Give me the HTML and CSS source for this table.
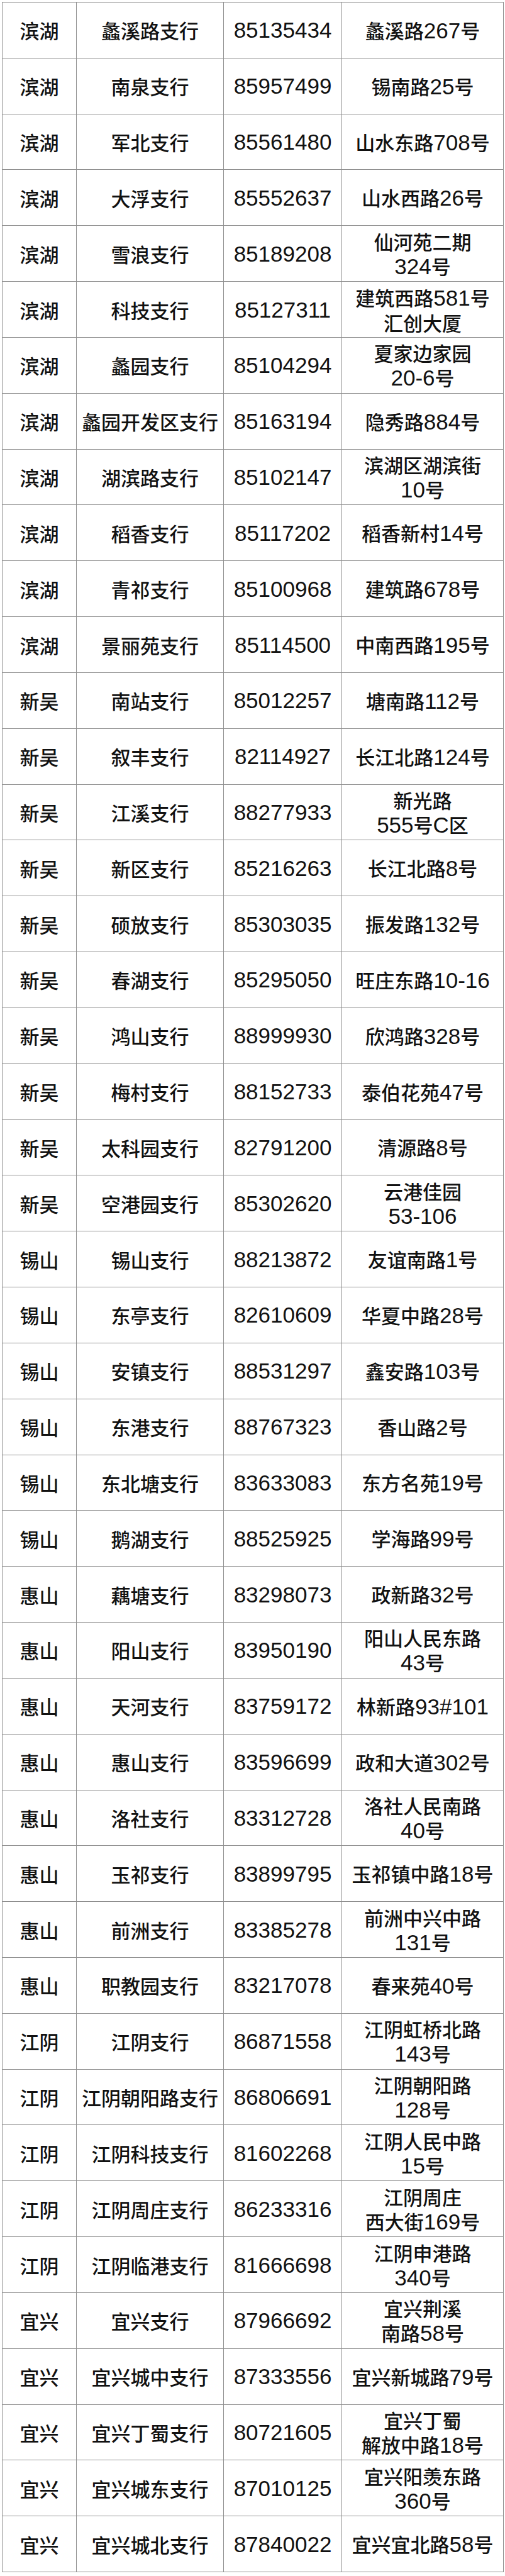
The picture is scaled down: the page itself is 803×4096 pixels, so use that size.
FILE: index.html
```html
<!DOCTYPE html>
<html lang="zh-CN">
<head>
<meta charset="utf-8">
<title>网点列表</title>
<link rel="stylesheet" href="styles.css">
</head>
<body>
<div class="grid">
<div class="c">滨湖</div><div class="c">蠡溪路支行</div><div class="c n">85135434</div><div class="c"><p class="t">蠡溪路<span class="n">267</span>号</p></div>
<div class="c">滨湖</div><div class="c">南泉支行</div><div class="c n">85957499</div><div class="c"><p class="t">锡南路<span class="n">25</span>号</p></div>
<div class="c">滨湖</div><div class="c">军北支行</div><div class="c n">85561480</div><div class="c"><p class="t">山水东路<span class="n">708</span>号</p></div>
<div class="c">滨湖</div><div class="c">大浮支行</div><div class="c n">85552637</div><div class="c"><p class="t">山水西路<span class="n">26</span>号</p></div>
<div class="c">滨湖</div><div class="c">雪浪支行</div><div class="c n">85189208</div><div class="c"><p class="t">仙河苑二期<br><span class="n">324</span>号</p></div>
<div class="c">滨湖</div><div class="c">科技支行</div><div class="c n">85127311</div><div class="c"><p class="t">建筑西路<span class="n">581</span>号<br>汇创大厦</p></div>
<div class="c">滨湖</div><div class="c">蠡园支行</div><div class="c n">85104294</div><div class="c"><p class="t">夏家边家园<br><span class="n">20-6</span>号</p></div>
<div class="c">滨湖</div><div class="c">蠡园开发区支行</div><div class="c n">85163194</div><div class="c"><p class="t">隐秀路<span class="n">884</span>号</p></div>
<div class="c">滨湖</div><div class="c">湖滨路支行</div><div class="c n">85102147</div><div class="c"><p class="t">滨湖区湖滨街<br><span class="n">10</span>号</p></div>
<div class="c">滨湖</div><div class="c">稻香支行</div><div class="c n">85117202</div><div class="c"><p class="t">稻香新村<span class="n">14</span>号</p></div>
<div class="c">滨湖</div><div class="c">青祁支行</div><div class="c n">85100968</div><div class="c"><p class="t">建筑路<span class="n">678</span>号</p></div>
<div class="c">滨湖</div><div class="c">景丽苑支行</div><div class="c n">85114500</div><div class="c"><p class="t">中南西路<span class="n">195</span>号</p></div>
<div class="c">新吴</div><div class="c">南站支行</div><div class="c n">85012257</div><div class="c"><p class="t">塘南路<span class="n">112</span>号</p></div>
<div class="c">新吴</div><div class="c">叙丰支行</div><div class="c n">82114927</div><div class="c"><p class="t">长江北路<span class="n">124</span>号</p></div>
<div class="c">新吴</div><div class="c">江溪支行</div><div class="c n">88277933</div><div class="c"><p class="t">新光路<br><span class="n">555</span>号<span class="n">C</span>区</p></div>
<div class="c">新吴</div><div class="c">新区支行</div><div class="c n">85216263</div><div class="c"><p class="t">长江北路<span class="n">8</span>号</p></div>
<div class="c">新吴</div><div class="c">硕放支行</div><div class="c n">85303035</div><div class="c"><p class="t">振发路<span class="n">132</span>号</p></div>
<div class="c">新吴</div><div class="c">春湖支行</div><div class="c n">85295050</div><div class="c"><p class="t">旺庄东路<span class="n">10-16</span></p></div>
<div class="c">新吴</div><div class="c">鸿山支行</div><div class="c n">88999930</div><div class="c"><p class="t">欣鸿路<span class="n">328</span>号</p></div>
<div class="c">新吴</div><div class="c">梅村支行</div><div class="c n">88152733</div><div class="c"><p class="t">泰伯花苑<span class="n">47</span>号</p></div>
<div class="c">新吴</div><div class="c">太科园支行</div><div class="c n">82791200</div><div class="c"><p class="t">清源路<span class="n">8</span>号</p></div>
<div class="c">新吴</div><div class="c">空港园支行</div><div class="c n">85302620</div><div class="c"><p class="t">云港佳园<br><span class="n">53-106</span></p></div>
<div class="c">锡山</div><div class="c">锡山支行</div><div class="c n">88213872</div><div class="c"><p class="t">友谊南路<span class="n">1</span>号</p></div>
<div class="c">锡山</div><div class="c">东亭支行</div><div class="c n">82610609</div><div class="c"><p class="t">华夏中路<span class="n">28</span>号</p></div>
<div class="c">锡山</div><div class="c">安镇支行</div><div class="c n">88531297</div><div class="c"><p class="t">鑫安路<span class="n">103</span>号</p></div>
<div class="c">锡山</div><div class="c">东港支行</div><div class="c n">88767323</div><div class="c"><p class="t">香山路<span class="n">2</span>号</p></div>
<div class="c">锡山</div><div class="c">东北塘支行</div><div class="c n">83633083</div><div class="c"><p class="t">东方名苑<span class="n">19</span>号</p></div>
<div class="c">锡山</div><div class="c">鹅湖支行</div><div class="c n">88525925</div><div class="c"><p class="t">学海路<span class="n">99</span>号</p></div>
<div class="c">惠山</div><div class="c">藕塘支行</div><div class="c n">83298073</div><div class="c"><p class="t">政新路<span class="n">32</span>号</p></div>
<div class="c">惠山</div><div class="c">阳山支行</div><div class="c n">83950190</div><div class="c"><p class="t">阳山人民东路<br><span class="n">43</span>号</p></div>
<div class="c">惠山</div><div class="c">天河支行</div><div class="c n">83759172</div><div class="c"><p class="t">林新路<span class="n">93#101</span></p></div>
<div class="c">惠山</div><div class="c">惠山支行</div><div class="c n">83596699</div><div class="c"><p class="t">政和大道<span class="n">302</span>号</p></div>
<div class="c">惠山</div><div class="c">洛社支行</div><div class="c n">83312728</div><div class="c"><p class="t">洛社人民南路<br><span class="n">40</span>号</p></div>
<div class="c">惠山</div><div class="c">玉祁支行</div><div class="c n">83899795</div><div class="c"><p class="t">玉祁镇中路<span class="n">18</span>号</p></div>
<div class="c">惠山</div><div class="c">前洲支行</div><div class="c n">83385278</div><div class="c"><p class="t">前洲中兴中路<br><span class="n">131</span>号</p></div>
<div class="c">惠山</div><div class="c">职教园支行</div><div class="c n">83217078</div><div class="c"><p class="t">春来苑<span class="n">40</span>号</p></div>
<div class="c">江阴</div><div class="c">江阴支行</div><div class="c n">86871558</div><div class="c"><p class="t">江阴虹桥北路<br><span class="n">143</span>号</p></div>
<div class="c">江阴</div><div class="c">江阴朝阳路支行</div><div class="c n">86806691</div><div class="c"><p class="t">江阴朝阳路<br><span class="n">128</span>号</p></div>
<div class="c">江阴</div><div class="c">江阴科技支行</div><div class="c n">81602268</div><div class="c"><p class="t">江阴人民中路<br><span class="n">15</span>号</p></div>
<div class="c">江阴</div><div class="c">江阴周庄支行</div><div class="c n">86233316</div><div class="c"><p class="t">江阴周庄<br>西大街<span class="n">169</span>号</p></div>
<div class="c">江阴</div><div class="c">江阴临港支行</div><div class="c n">81666698</div><div class="c"><p class="t">江阴申港路<br><span class="n">340</span>号</p></div>
<div class="c">宜兴</div><div class="c">宜兴支行</div><div class="c n">87966692</div><div class="c"><p class="t">宜兴荆溪<br>南路<span class="n">58</span>号</p></div>
<div class="c">宜兴</div><div class="c">宜兴城中支行</div><div class="c n">87333556</div><div class="c"><p class="t">宜兴新城路<span class="n">79</span>号</p></div>
<div class="c">宜兴</div><div class="c">宜兴丁蜀支行</div><div class="c n">80721605</div><div class="c"><p class="t">宜兴丁蜀<br>解放中路<span class="n">18</span>号</p></div>
<div class="c">宜兴</div><div class="c">宜兴城东支行</div><div class="c n">87010125</div><div class="c"><p class="t">宜兴阳羡东路<br><span class="n">360</span>号</p></div>
<div class="c">宜兴</div><div class="c">宜兴城北支行</div><div class="c n">87840022</div><div class="c"><p class="t">宜兴宜北路<span class="n">58</span>号</p></div>
</div>
</body>
</html>
```
FILE: styles.css
```css
html, body {
  margin: 0;
  padding: 0;
  background: #ffffff;
}

body {
  font-family: "Noto Sans CJK SC", "Liberation Sans", sans-serif;
  color: #111111;
}

.grid {
  margin: 3px 0 0 3px;
  width: 798px;
  box-sizing: border-box;
  padding: 1px;
  gap: 1px;
  background: #8f8f8f;
  display: grid;
  grid-template-columns: 117px 233px 187px 256px;
  grid-auto-rows: 87.83px;
}

.c {
  background: #ffffff;
  display: flex;
  align-items: center;
  justify-content: center;
  text-align: center;
  font-size: 31px;
  font-weight: 500;
  line-height: 39px;
  white-space: nowrap;
  overflow: hidden;
}

.t {
  margin: 0;
  text-align: center;
}

.n {
  font-family: "Liberation Sans", "Noto Sans CJK SC", sans-serif;
  font-size: 35px;
  font-weight: 400;
  line-height: 39px;
}
```
